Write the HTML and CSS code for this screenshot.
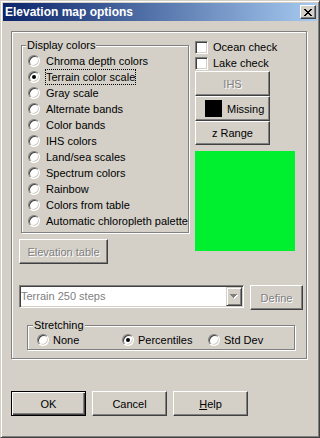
FILE: index.html
```html
<!DOCTYPE html>
<html lang="en">
<head>
    <meta charset="UTF-8">
    <title>Elevation map options</title>
    <link rel="stylesheet" href="styles.css">
</head>
<body>
    <div class="window">
        <div class="titlebar">
            <span class="title">Elevation map options</span>
            <span class="close-btn">
                <svg width="8" height="7" viewBox="0 0 8 7" shape-rendering="crispEdges">
                    <rect x="0" y="0" width="2" height="1"/><rect x="6" y="0" width="2" height="1"/>
                    <rect x="1" y="1" width="2" height="1"/><rect x="5" y="1" width="2" height="1"/>
                    <rect x="2" y="2" width="4" height="1"/>
                    <rect x="3" y="3" width="2" height="1"/>
                    <rect x="2" y="4" width="4" height="1"/>
                    <rect x="1" y="5" width="2" height="1"/><rect x="5" y="5" width="2" height="1"/>
                    <rect x="0" y="6" width="2" height="1"/><rect x="6" y="6" width="2" height="1"/>
                </svg>
            </span>
        </div>

        <div class="client">
            <div class="panel">
                <div class="top-row">
                    <div class="left-col">
                        <div class="group colors">
                            <div class="group-title">Display colors</div>
                            <div class="radio-list">
                                <div class="radio-row"><span class="radio"></span><span>Chroma depth colors</span></div>
                                <div class="radio-row"><span class="radio checked"></span><span class="focus">Terrain color scale</span></div>
                                <div class="radio-row"><span class="radio"></span><span>Gray scale</span></div>
                                <div class="radio-row"><span class="radio"></span><span>Alternate bands</span></div>
                                <div class="radio-row"><span class="radio"></span><span>Color bands</span></div>
                                <div class="radio-row"><span class="radio"></span><span>IHS colors</span></div>
                                <div class="radio-row"><span class="radio"></span><span>Land/sea scales</span></div>
                                <div class="radio-row"><span class="radio"></span><span>Spectrum colors</span></div>
                                <div class="radio-row"><span class="radio"></span><span>Rainbow</span></div>
                                <div class="radio-row"><span class="radio"></span><span>Colors from table</span></div>
                                <div class="radio-row"><span class="radio"></span><span>Automatic chloropleth palette</span></div>
                            </div>
                        </div>
                        <button class="btn disabled elev-btn">Elevation table</button>
                    </div>

                    <div class="side">
                        <div class="check-row"><span class="checkbox"></span><span>Ocean check</span></div>
                        <div class="check-row lake"><span class="checkbox"></span><span>Lake check</span></div>
                        <button class="btn disabled ihs">IHS</button>
                        <button class="btn missing"><span class="swatch"></span>Missing</button>
                        <button class="btn zrange">z Range</button>
                        <div class="preview"></div>
                    </div>
                </div>

                <div class="combo-row">
                    <div class="combo">
                        <span class="combo-text">Terrain 250 steps</span>
                        <span class="combo-arrow">
                            <svg width="8" height="5" viewBox="0 0 8 5" shape-rendering="crispEdges">
                                <path d="M1 1h7l-3.5 4z" fill="#fff"/>
                                <path d="M0 0h7l-3.5 4z" fill="#808080"/>
                            </svg>
                        </span>
                    </div>
                    <button class="btn disabled define-btn">Define</button>
                </div>

                <div class="group stretching">
                    <div class="group-title">Stretching</div>
                    <div class="stretch-row">
                        <div class="radio-row opt-none"><span class="radio"></span><span>None</span></div>
                        <div class="radio-row opt-pct"><span class="radio checked"></span><span>Percentiles</span></div>
                        <div class="radio-row"><span class="radio"></span><span>Std Dev</span></div>
                    </div>
                </div>
            </div>

            <div class="dialog-buttons">
                <button class="btn default">OK</button>
                <button class="btn">Cancel</button>
                <button class="btn"><u>H</u>elp</button>
            </div>
        </div>
    </div>
</body>
</html>
```

FILE: styles.css
```css
body {
    margin: 0;
    background: #d4d0c8;
    font-family: "Liberation Sans", Arial, sans-serif;
    font-size: 11px;
    color: #000;
}

.window {
    width: 320px;
    height: 438px;
    box-sizing: border-box;
    border: 1px solid;
    border-color: #d4d0c8 #404040 #404040 #d4d0c8;
    box-shadow: inset 1px 1px #fff, inset -1px -1px #808080;
    padding: 2px;
    background: #d4d0c8;
}

.titlebar {
    height: 18px;
    display: flex;
    align-items: flex-start;
    background: linear-gradient(to right, #0a246a, #a6caf0);
}

.title {
    flex: 1;
    padding-left: 2px;
    color: #fff;
    font-weight: bold;
    font-size: 12px;
    line-height: 18px;
}

.close-btn {
    width: 16px;
    height: 14px;
    margin: 2px 1px 0 0;
    box-sizing: border-box;
    border: 1px solid;
    border-color: #fff #404040 #404040 #fff;
    box-shadow: inset -1px -1px #808080;
    background: #d4d0c8;
    display: flex;
    align-items: center;
    justify-content: center;
}

.client {
    padding: 10px 0 0 8px;
}

.panel {
    width: 296px;
    height: 328px;
    box-sizing: border-box;
    border: 1px solid #808080;
    box-shadow: inset 1px 1px #fff, 1px 1px #fff;
    padding-left: 7px;
}

.top-row {
    display: flex;
    align-items: flex-start;
}

.group {
    box-sizing: border-box;
    border: 1px solid #808080;
    box-shadow: inset 1px 1px #fff, 1px 1px #fff;
}

.group-title {
    width: fit-content;
    height: 13px;
    margin: -7px 0 0 4px;
    padding: 0 1px;
    line-height: 13px;
    background: #d4d0c8;
}

.colors {
    width: 168px;
    height: 188px;
    margin: 13px 0 0 2px;
}

.radio-list {
    margin-top: 1px;
}

.radio-row {
    display: flex;
    align-items: center;
    height: 16px;
    padding-left: 6px;
    white-space: nowrap;
}

.radio {
    position: relative;
    flex: none;
    width: 12px;
    height: 12px;
    box-sizing: border-box;
    margin-right: 6px;
    border: 1px solid;
    border-color: #808080 #fff #fff #808080;
    border-radius: 50%;
    box-shadow: inset 1px 1px #404040, inset -1px -1px #d4d0c8;
    background: #fff;
}

.radio.checked::after {
    content: "";
    position: absolute;
    left: 3px;
    top: 3px;
    width: 4px;
    height: 4px;
    border-radius: 50%;
    background: #000;
}

.focus {
    line-height: 14px;
    outline: 1px dotted #000;
}

.btn {
    display: flex;
    align-items: center;
    justify-content: center;
    box-sizing: border-box;
    padding: 0;
    font: inherit;
    color: #000;
    background: #d4d0c8;
    border: 1px solid;
    border-color: #fff #404040 #404040 #fff;
    box-shadow: inset -1px -1px #808080;
}

.btn.disabled {
    color: #808080;
    text-shadow: 1px 1px #fff;
}

.elev-btn {
    width: 89px;
    height: 25px;
    margin-top: 6px;
}

.side {
    width: 100px;
    margin: 8px 0 0 6px;
}

.check-row {
    display: flex;
    align-items: flex-start;
    height: 16px;
    line-height: 15px;
}

.check-row.lake {
    height: 15px;
}

.checkbox {
    flex: none;
    width: 13px;
    height: 13px;
    box-sizing: border-box;
    margin: 1px 5px 0 0;
    border: 1px solid;
    border-color: #808080 #fff #fff #808080;
    box-shadow: inset 1px 1px #404040, inset -1px -1px #d4d0c8;
    background: #fff;
}

.ihs,
.missing,
.zrange {
    width: 75px;
}

.ihs {
    height: 25px;
}

.missing {
    height: 25px;
    justify-content: flex-start;
    padding-left: 9px;
}

.swatch {
    width: 17px;
    height: 17px;
    margin-right: 5px;
    background: #000;
}

.zrange {
    height: 24px;
}

.preview {
    width: 100px;
    height: 100px;
    margin-top: 6px;
    background: #00f030;
}

.combo-row {
    display: flex;
    align-items: flex-start;
    margin-top: 21px;
}

.combo {
    display: flex;
    width: 225px;
    height: 23px;
    box-sizing: border-box;
    padding: 1px;
    border: 1px solid;
    border-color: #808080 #fff #fff #808080;
    box-shadow: inset 1px 1px #404040, inset -1px -1px #d4d0c8;
    background: #fff;
}

.combo-text {
    flex: 1;
    color: #808080;
    line-height: 19px;
}

.combo-arrow {
    display: flex;
    align-items: center;
    justify-content: center;
    width: 16px;
    height: 19px;
    box-sizing: border-box;
    border: 1px solid;
    border-color: #d4d0c8 #404040 #404040 #d4d0c8;
    box-shadow: inset 1px 1px #fff, inset -1px -1px #808080;
    background: #d4d0c8;
}

.define-btn {
    width: 53px;
    height: 25px;
    margin-left: 6px;
}

.stretching {
    width: 268px;
    height: 25px;
    margin: 15px 0 0 8px;
}

.stretching .group-title {
    margin-left: 5px;
}

.stretch-row {
    display: flex;
    height: 14px;
    margin-top: 1px;
    padding-left: 9px;
}

.stretch-row .radio-row {
    height: 14px;
    padding-left: 0;
}

.stretch-row .radio {
    margin-right: 4px;
}

.opt-none {
    width: 85px;
}

.opt-pct {
    width: 86px;
}

.dialog-buttons {
    display: flex;
    gap: 6px;
    margin-top: 32px;
}

.dialog-buttons .btn {
    width: 75px;
    height: 25px;
}

.btn.default {
    border: 1px solid #000;
    box-shadow: inset 1px 1px #fff, inset -1px -1px #404040, inset -2px -2px #808080;
}
```
